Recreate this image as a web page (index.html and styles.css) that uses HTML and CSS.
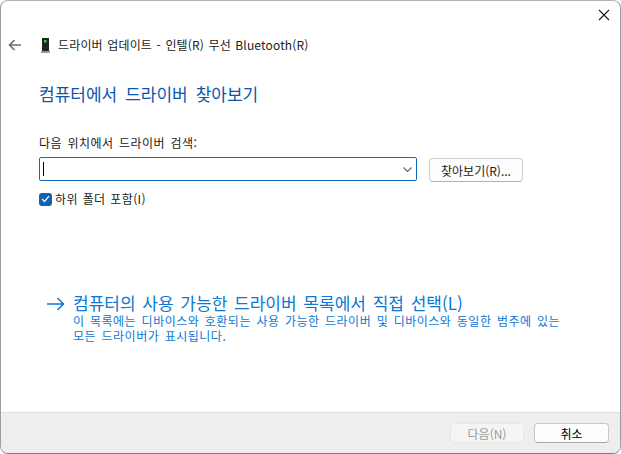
FILE: index.html
```html
<!DOCTYPE html>
<html lang="ko">
<head>
<meta charset="utf-8">
<title>드라이버 업데이트</title>
<link rel="stylesheet" href="styles.css">
</head>
<body>
<div class="window">
  <div class="titlebar">
    <svg class="close" width="12" height="12" viewBox="0 0 12 12"><path d="M1 1L11 11M11 1L1 11" stroke="#1a1a1a" stroke-width="1.1" fill="none"/></svg>
  </div>
  <div class="main">
    <div class="nav">
      <svg class="back" width="14" height="12" viewBox="0 0 14 12"><path d="M13 6H1.5M6.5 1L1.5 6L6.5 11" stroke="#6e6e6e" stroke-width="1.6" fill="none"/></svg>
      <svg class="device" width="9" height="15" viewBox="0 0 9 15"><rect x="1" y="0" width="7" height="13" fill="#222"/><rect x="3" y="2" width="2.5" height="2.5" fill="#2fd04a"/><rect x="0" y="13" width="9" height="2" fill="#9a9a9a"/></svg>
      <span class="nav-title">드라이버 업데이트 - 인텔(R) 무선 Bluetooth(R)</span>
    </div>
    <h1 class="heading">컴퓨터에서 드라이버 찾아보기</h1>
    <div class="label">다음 위치에서 드라이버 검색:</div>
    <div class="search-row">
      <div class="combo">
        <span class="caret"></span>
        <svg class="chevron" width="9" height="5" viewBox="0 0 9 5"><path d="M0.5 0.5L4.5 4.5L8.5 0.5" stroke="#666" stroke-width="1.1" fill="none"/></svg>
      </div>
      <div class="btn browse">찾아보기(R)...</div>
    </div>
    <div class="check-row">
      <span class="checkbox"><svg width="9" height="8" viewBox="0 0 9 8"><path d="M1 4L3.5 6.5L8 1.2" stroke="#fff" stroke-width="1.2" fill="none"/></svg></span>
      <span class="check-label">하위 폴더 포함(I)</span>
    </div>
    <div class="link-block">
      <svg class="link-arrow" width="18" height="14" viewBox="0 0 18 14"><path d="M0 7H16.5M10.5 1L16.5 7L10.5 13" stroke="#0a78d4" stroke-width="1.6" fill="none"/></svg>
      <div class="link-text">
        <div class="link-title">컴퓨터의 사용 가능한 드라이버 목록에서 직접 선택(L)</div>
        <div class="link-desc">이 목록에는 디바이스와 호환되는 사용 가능한 드라이버 및 디바이스와 동일한 범주에 있는<br>모든 드라이버가 표시됩니다.</div>
      </div>
    </div>
  </div>
  <div class="footer">
    <div class="btn next">다음(N)</div>
    <div class="btn cancel">취소</div>
  </div>
</div>
</body>
</html>
```
FILE: styles.css
```css
* { box-sizing: border-box; }
html, body { margin: 0; padding: 0; background: #fff; }
body { width: 621px; height: 454px; font-family: "Noto Sans CJK KR", "Noto Sans", sans-serif; font-size: 12px; color: #1a1a1a; }
.window {
  width: 621px; height: 454px;
  border: 1px solid #b4b4b4; border-left-color: #9c9c9c; border-right-color: #9c9c9c; border-bottom-color: #7c7c7c;
  border-radius: 8px; overflow: hidden; background: #fff;
  display: flex; flex-direction: column;
}
.titlebar { height: 29px; flex: none; display: flex; justify-content: flex-end; align-items: flex-start; padding: 8px 10px 0 0; }
.main { flex: 1; display: flex; flex-direction: column; padding-left: 7px; }
.nav { display: flex; align-items: center; height: 30px; }
.back { margin-right: 19px; }
.device { margin-right: 8px; }
.nav-title { font-size: 12px; line-height: 16px; letter-spacing: .15px; word-spacing: 1px; }
.heading { margin: 22px 0 0 31px; font-size: 17px; font-weight: 400; line-height: 24px; color: #0a56ae; word-spacing: 3.2px; }
.label { margin: 29px 0 0 31px; line-height: 16px; font-size: 12px; letter-spacing: .5px; word-spacing: 1.5px; }
.search-row { display: flex; align-items: flex-start; margin: 6px 0 0 31px; }
.combo { width: 378px; height: 24px; border: 1px solid #0f6cbd; border-radius: 2px; display: flex; align-items: center; justify-content: space-between; padding: 0 3px 0 3px; background: #fff; }
.caret { width: 1px; height: 14px; background: #000; }
.chevron { margin-right: 1px; }
.btn { border: 1px solid #d0d0d0; border-radius: 4px; background: #fdfdfd; display: flex; align-items: center; justify-content: center; font-size: 12px; color: #1a1a1a; }
.browse { width: 94px; height: 24px; margin: 1px 0 0 12px; border-color: #cfcfcf; border-bottom-color: #b0b0b0; }
.check-row { display: flex; align-items: center; margin: 9px 0 0 31px; height: 16px; }
.checkbox { width: 13px; height: 13px; border-radius: 3px; background: #0f62b8; display: flex; align-items: center; justify-content: center; margin-right: 3px; }
.check-label { line-height: 16px; letter-spacing: .4px; word-spacing: 1px; }
.link-block { display: flex; align-items: flex-start; margin: 85px 0 0 39px; }
.link-arrow { margin: 5px 8px 0 0; }
.link-title { font-size: 17px; line-height: 22px; color: #0a78d4; letter-spacing: 0; word-spacing: 2px; }
.link-desc { font-size: 12px; line-height: 15px; color: #0a78d4; margin-top: -1px; letter-spacing: .5px; word-spacing: 1.6px; }
.footer { height: 41px; flex: none; background: #eeeeee; border-top: 1px solid #dcdcdc; display: flex; justify-content: flex-end; align-items: flex-start; padding: 10px 11px 0 0; gap: 10px; }
.next { width: 74px; height: 20px; color: #9a9a9a; background: #f5f5f5; border-color: #e8e8e8; }
.cancel { width: 75px; height: 20px; border-color: #c8c8c8; border-bottom-color: #a8a8a8; color: #000; }
```
